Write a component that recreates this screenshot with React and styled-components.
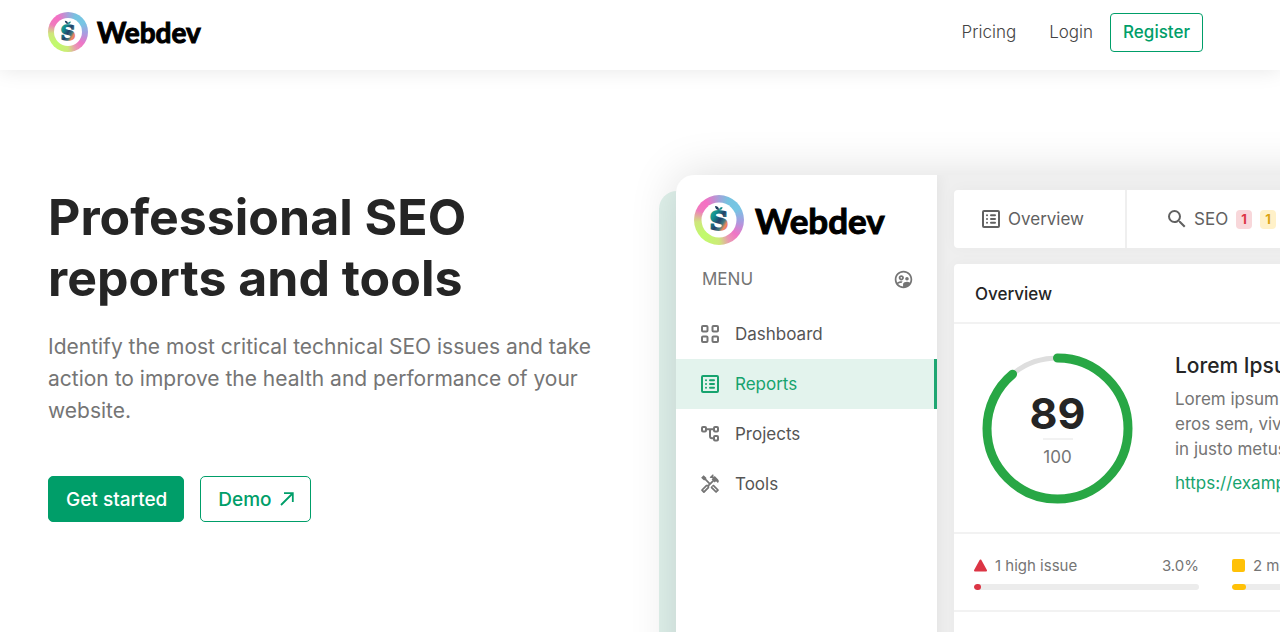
import React from "react";
import styled, { createGlobalStyle } from "styled-components";
import {
  MdOutlineHandyman,
  MdOutlineSupervisedUserCircle,
  MdSearch,
} from "react-icons/md";

const GlobalStyle = createGlobalStyle`
  *, *::before, *::after { box-sizing: border-box; }
  body {
    margin: 0;
    background: #fff;
    color: #757575;
    font-family: Inter, "Liberation Sans", sans-serif;
    font-size: 17px;
    overflow: hidden;
  }
  h1, h2, h3, p, ul { margin: 0; padding: 0; }
  ul { list-style: none; }
  a { color: inherit; text-decoration: none; }
  button { font-family: inherit; cursor: pointer; }
`;

const Page = styled.div`
  display: flex;
  flex-direction: column;
  height: 100vh;
  overflow: hidden;
`;

const Header = styled.header`
  position: relative;
  z-index: 1;
  flex: none;
  display: flex;
  align-items: center;
  justify-content: space-between;
  height: 70px;
  padding: 0 77px 6px 48px;
  background: #fff;
  box-shadow: 0 0 20px rgba(0, 0, 0, 0.1);
`;

const Nav = styled.nav`
  display: flex;
  align-items: center;
`;

const NavLink = styled.a`
  padding: 8px 17px 8px 16px;
  font-weight: 300;
  color: #444;
`;

const Button = styled.button`
  display: inline-flex;
  align-items: center;
  justify-content: center;
  gap: 8px;
  height: ${(p) => (p.$large ? "46px" : "39px")};
  padding: ${(p) => (p.$large ? "0 16px 0 17px" : "0 12px")};
  border: 1px solid #009e69;
  border-radius: ${(p) => (p.$large ? "5px" : "4px")};
  background: ${(p) => (p.$filled ? "#009e69" : "#fff")};
  color: ${(p) => (p.$filled ? "#fff" : "#009e69")};
  font-size: ${(p) => (p.$large ? "19px" : "17px")};
  font-weight: 500;
`;

const Brand = styled.a`
  display: flex;
  align-items: center;
  gap: ${(p) => (p.$large ? "11px" : "9px")};
  color: #000;
  font-family: Lato, "Noto Sans", sans-serif;
  font-size: ${(p) => (p.$large ? "35px" : "28px")};
  font-weight: 700;
  line-height: 40px;
  -webkit-text-stroke: 1px #000;
`;

const BrandRing = styled.span`
  display: grid;
  place-items: center;
  width: ${(p) => (p.$large ? "50px" : "40px")};
  height: ${(p) => (p.$large ? "50px" : "40px")};
  border-radius: 50%;
  background: conic-gradient(
    #a5a2da 0deg, #76c3e0 25deg, #76c6e4 60deg, #a99be0 95deg, #f074c6 130deg,
    #e99bb0 155deg, #cdea78 180deg, #c0fb6c 225deg, #cfe67c 265deg,
    #f07bbd 295deg, #f56fc4 325deg, #a5a2da 360deg
  );
  -webkit-text-stroke: 0;
`;

const Hero = styled.main`
  flex: 1;
  display: grid;
  grid-template-columns: minmax(0, 1fr) minmax(0, 1fr);
  align-items: start;
  min-height: 0;
  padding-left: 48px;
  column-gap: 24px;
`;

const Intro = styled.section`
  padding: 117px 24px 0 0;
`;

const Title = styled.h1`
  color: #252525;
  font-size: 50px;
  font-weight: 700;
  line-height: 61px;
`;

const Lead = styled.p`
  margin-top: 22px;
  font-size: 21px;
  line-height: 32px;
  color: #757575;
`;

const Actions = styled.div`
  display: flex;
  gap: 16px;
  margin-top: 49px;
`;

const Preview = styled.section`
  position: relative;
  margin-top: 105px;
  min-width: 1000px;
  height: 640px;

  &::before {
    content: "";
    position: absolute;
    inset: 16px 0 0 -17px;
    border-radius: 18px;
    background: #e0f2ec;
  }
`;

const Window = styled.div`
  position: relative;
  display: flex;
  height: 100%;
  overflow: hidden;
  border-radius: 18px;
  background: #efefef;
`;

const WindowShadow = styled.div`
  position: absolute;
  inset: 0;
  border-radius: 18px;
  box-shadow: 0 0 48px rgba(0, 0, 0, 0.14);
`;

const Sidebar = styled.aside`
  position: relative;
  flex: none;
  width: 261px;
  padding-top: 20px;
  background: #fff;
  box-shadow: 0 0 16px rgba(0, 0, 0, 0.07);
`;

const SidebarBrand = styled.div`
  padding-left: 18px;
`;

const MenuHeading = styled.div`
  display: flex;
  align-items: center;
  justify-content: space-between;
  height: 24px;
  margin: 22px 23px 18px 26px;
  color: #757575;
`;

const MenuLink = styled.a`
  display: flex;
  align-items: center;
  gap: 13px;
  height: 50px;
  padding-left: 22px;
  border-right: 3px solid ${(p) => (p.$active ? "#1ea672" : "transparent")};
  background: ${(p) => (p.$active ? "#e3f3ed" : "transparent")};
  color: ${(p) => (p.$active ? "#16a36e" : "#555")};

  svg { color: ${(p) => (p.$active ? "#16a36e" : "#757575")}; }
`;

const Content = styled.div`
  flex: 1;
  padding: 15px 16px 15px 17px;
`;

const Card = styled.div`
  min-height: 400px;
  border-radius: 4px;
  background: #fff;
  box-shadow: 0 0 16px rgba(0, 0, 0, 0.03);
`;

const Tabs = styled.nav`
  display: flex;
  height: 58px;
  margin-bottom: 16px;
  border-radius: 4px;
  background: #fff;
  box-shadow: 0 0 16px rgba(0, 0, 0, 0.03);
`;

const Tab = styled.a`
  display: flex;
  align-items: center;
  gap: 5px;
  padding: 0 41px 0 ${(p) => (p.$first ? "25px" : "38px")};
  border-right: 2px solid #efefef;
  color: #616161;
`;

const Badge = styled.span`
  display: grid;
  place-items: center;
  width: 16px;
  height: 19px;
  margin-left: 3px;
  border-radius: 4px;
  background: ${(p) => (p.$tone === "high" ? "#f8d7da" : "#fff1c9")};
  color: ${(p) => (p.$tone === "high" ? "#dc3545" : "#dba414")};
  font-size: 13px;
  font-weight: 700;
`;

const CardTitle = styled.h2`
  height: 60px;
  padding: 0 21px;
  border-bottom: 2px solid #f2f2f2;
  color: #252525;
  font-size: 17px;
  font-weight: 500;
  line-height: 61px;
`;

const Summary = styled.div`
  display: flex;
  gap: 42px;
  height: 210px;
  padding: 29px 28px 0;
  border-bottom: 2px solid #f2f2f2;
`;

const Score = styled.div`
  display: grid;
  flex: none;
  width: 151px;
  height: 151px;

  > * { grid-area: 1 / 1; }
`;

const ScoreText = styled.div`
  display: flex;
  flex-direction: column;
  align-items: center;
  justify-content: center;
  padding-top: 4px;
`;

const ScoreValue = styled.strong`
  color: #252525;
  font-size: 43px;
  font-weight: 700;
  line-height: 50px;
`;

const ScoreTotal = styled.span`
  width: 30px;
  border-top: 2px solid #f2f2f2;
  line-height: 34px;
  display: flex;
  justify-content: center;
`;

const SiteInfo = styled.div`
  line-height: 25px;
  white-space: nowrap;
`;

const SiteTitle = styled.h3`
  margin-bottom: 9px;
  color: #252525;
  font-size: 21px;
  font-weight: 500;
`;

const SiteLink = styled.a`
  display: block;
  margin-top: 9px;
  color: #16a36e;
`;

const Issues = styled.div`
  display: grid;
  grid-template-columns: repeat(3, 225px);
  gap: 33px;
  height: 78px;
  padding: 19px 20px 0;
  border-bottom: 2px solid #f2f2f2;
`;

const IssueRow = styled.div`
  display: flex;
  align-items: center;
  gap: 8px;
  height: 25px;
  font-size: 15px;

  span:last-child { margin-left: auto; }
`;

const Track = styled.div`
  height: 6px;
  margin-top: 6px;
  overflow: hidden;
  border-radius: 3px;
  background: #ececec;
`;

const Fill = styled.div`
  height: 100%;
  border-radius: 3px;
  background: ${(p) => p.$color};
`;

function Logo({ large, id }) {
  return (
    <Brand href="#" $large={large}>
      <BrandRing $large={large}>
        <svg width="100%" height="100%" viewBox="0 0 50 50" aria-hidden="true">
          <defs>
            <linearGradient id={id} x1="0" y1="0" x2="1" y2="1">
              <stop offset="0" stopColor="#2cc4a0" />
              <stop offset="0.3" stopColor="#138c8c" />
              <stop offset="0.5" stopColor="#24416b" />
              <stop offset="0.64" stopColor="#3f7a80" />
              <stop offset="0.74" stopColor="#f08a5c" />
              <stop offset="1" stopColor="#d04b80" />
            </linearGradient>
          </defs>
          <circle cx="25" cy="25" r="17.5" fill="#fff" />
          <text
            x="25"
            y="35"
            textAnchor="middle"
            fontFamily="DejaVu Serif, serif"
            fontWeight="700"
            fontSize="26"
            fill={`url(#${id})`}
            stroke={`url(#${id})`}
            strokeWidth="1.8"
          >
            S
          </text>
          <path d="M21 11C23.500 11 25 12.500 25 15C22.500 15 21.300 13.500 21 11Z" fill="#1c3c5c" />
          <path d="M25 15C25 13 26.500 12 28.500 12C28.500 14 27 15.300 25 15Z" fill="#168c8a" />
        </svg>
      </BrandRing>
      Webdev
    </Brand>
  );
}

function OutlineIcon({ children }) {
  return (
    <svg
      width="24"
      height="24"
      viewBox="0 0 24 24"
      fill="none"
      stroke="currentColor"
      strokeWidth="2"
      strokeLinecap="round"
      aria-hidden="true"
    >
      {children}
    </svg>
  );
}

const GridIcon = () => (
  <OutlineIcon>
    <rect x="4" y="4" width="5.500" height="5.500" rx="1" />
    <rect x="14.500" y="4" width="5.500" height="5.500" rx="1" />
    <rect x="4" y="14.500" width="5.500" height="5.500" rx="1" />
    <rect x="14.500" y="14.500" width="5.500" height="5.500" rx="1" />
  </OutlineIcon>
);

const ListIcon = () => (
  <OutlineIcon>
    <rect x="4" y="4" width="16" height="16" rx="1" />
    <path d="M8 8.200h.01M8 12h.01M8 15.800h.01M12 8.200h4M12 12h4M12 15.800h4" />
  </OutlineIcon>
);

const TreeIcon = () => (
  <OutlineIcon>
    <rect x="4" y="5" width="4" height="4.500" rx="1" />
    <rect x="16" y="5" width="4" height="4.500" rx="1" />
    <rect x="16" y="14" width="4" height="4.500" rx="1" />
    <path d="M8 7.200h8M12 7.200v7q0 2 2 2h2" />
  </OutlineIcon>
);

const ToolsIcon = () => (
  <svg width="24" height="24" viewBox="-1.500 -1.500 27 27" aria-hidden="true">
    <MdOutlineHandyman size={24} />
  </svg>
);

const ArrowIcon = () => (
  <svg
    width="14"
    height="14"
    viewBox="0 0 14 14"
    fill="none"
    stroke="currentColor"
    strokeWidth="1.8"
    aria-hidden="true"
  >
    <path d="M1 13L12.500 1.500M4 1.200h8.800V10" />
  </svg>
);

const menu = [
  { label: "Dashboard", Icon: GridIcon },
  { label: "Reports", Icon: ListIcon, active: true },
  { label: "Projects", Icon: TreeIcon },
  { label: "Tools", Icon: ToolsIcon },
];

const issues = [
  { label: "1 high issue", share: 3, color: "#dc3545", shape: <path d="M6.500 1.500L12 11.500H1Z" strokeWidth="2" strokeLinejoin="round" /> },
  { label: "2 medium issues", share: 6, color: "#ffc107", shape: <rect x="1" y="1" width="11" height="11" rx="1" strokeWidth="2" /> },
];

function ScoreRing({ value }) {
  return (
    <svg viewBox="0 0 151 151" aria-hidden="true">
      <g fill="none" transform="rotate(-90 75.5 75.5)">
        <circle cx="75.5" cy="75.5" r="70.5" stroke="#dedede" strokeWidth="5" />
        <circle
          cx="75.5"
          cy="75.5"
          r="70.5"
          stroke="#28a745"
          strokeWidth="9"
          strokeLinecap="round"
          pathLength="100"
          strokeDasharray={`${value} 100`}
        />
      </g>
    </svg>
  );
}

export default function App() {
  return (
    <Page>
      <GlobalStyle />
      <Header>
        <Logo id="brand-header" />
        <Nav>
          <NavLink href="#">Pricing</NavLink>
          <NavLink href="#">Login</NavLink>
          <Button type="button">Register</Button>
        </Nav>
      </Header>
      <Hero>
        <Intro>
          <Title>Professional SEO reports and tools</Title>
          <Lead>
            Identify the most critical technical SEO issues and take action to improve the health and
            performance of your website.
          </Lead>
          <Actions>
            <Button type="button" $large $filled>Get started</Button>
            <Button type="button" $large>
              Demo <ArrowIcon />
            </Button>
          </Actions>
        </Intro>
        <Preview>
          <WindowShadow />
          <Window>
            <Sidebar>
              <SidebarBrand>
                <Logo large id="brand-sidebar" />
              </SidebarBrand>
              <MenuHeading>
                MENU
                <MdOutlineSupervisedUserCircle size={21} />
              </MenuHeading>
              <ul>
                {menu.map(({ label, Icon, active }) => (
                  <li key={label}>
                    <MenuLink href="#" $active={active}>
                      <Icon />
                      {label}
                    </MenuLink>
                  </li>
                ))}
              </ul>
            </Sidebar>
            <Content>
              <Tabs>
                <Tab href="#" $first>
                  <ListIcon />
                  Overview
                </Tab>
                <Tab href="#">
                  <MdSearch size={24} />
                  SEO
                  <Badge $tone="high">1</Badge>
                  <Badge>1</Badge>
                </Tab>
              </Tabs>
              <Card>
                <CardTitle>Overview</CardTitle>
                <Summary>
                  <Score>
                    <ScoreRing value={89} />
                    <ScoreText>
                      <ScoreValue>89</ScoreValue>
                      <ScoreTotal>100</ScoreTotal>
                    </ScoreText>
                  </Score>
                  <SiteInfo>
                    <SiteTitle>Lorem Ipsum</SiteTitle>
                    <p>Lorem ipsum dolor sit amet</p>
                    <p>eros sem, viverra</p>
                    <p>in justo metus</p>
                    <SiteLink href="#">https://example.com</SiteLink>
                  </SiteInfo>
                </Summary>
                <Issues>
                  {issues.map(({ label, share, color, shape }) => (
                    <div key={label}>
                      <IssueRow>
                        <svg width="13" height="13" viewBox="0 0 13 13" fill={color} stroke={color} aria-hidden="true">
                          {shape}
                        </svg>
                        <span>{label}</span>
                        <span>{share.toFixed(1)}%</span>
                      </IssueRow>
                      <Track>
                        <Fill $color={color} style={{ width: `${share}%` }} />
                      </Track>
                    </div>
                  ))}
                </Issues>
              </Card>
            </Content>
          </Window>
        </Preview>
      </Hero>
    </Page>
  );
}
